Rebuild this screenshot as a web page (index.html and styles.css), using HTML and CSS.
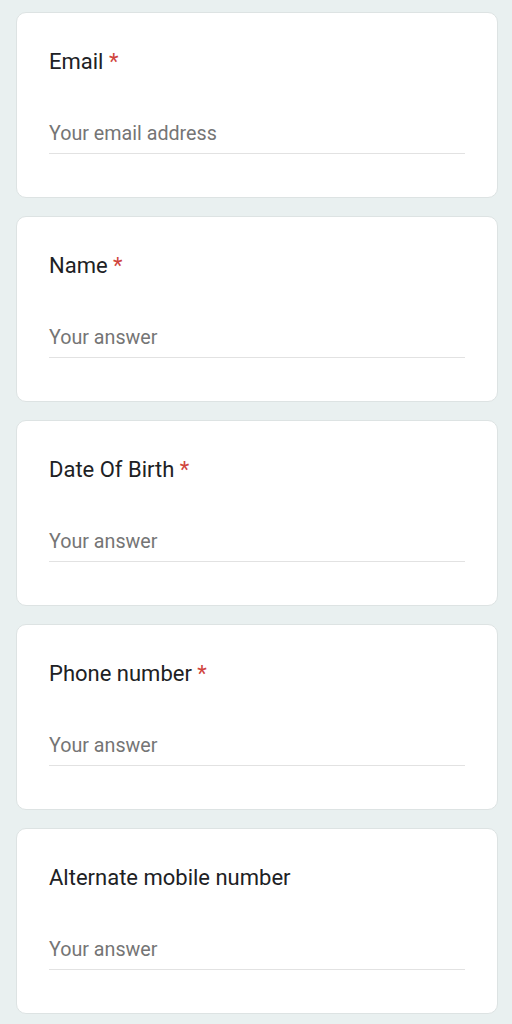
FILE: index.html
```html
<!DOCTYPE html>
<html>
<head>
<meta charset="utf-8">
<link rel="stylesheet" href="styles.css">
</head>
<body>
<main class="form">
  <section class="card">
    <div class="label">Email <span class="req">*</span></div>
    <div class="field">Your email address</div>
  </section>
  <section class="card">
    <div class="label">Name <span class="req">*</span></div>
    <div class="field">Your answer</div>
  </section>
  <section class="card">
    <div class="label">Date Of Birth <span class="req">*</span></div>
    <div class="field">Your answer</div>
  </section>
  <section class="card">
    <div class="label">Phone number <span class="req">*</span></div>
    <div class="field">Your answer</div>
  </section>
  <section class="card">
    <div class="label">Alternate mobile number</div>
    <div class="field">Your answer</div>
  </section>
</main>
</body>
</html>
```
FILE: styles.css
```css
html, body {
  margin: 0;
  padding: 0;
  background: #e9f0f0;
}
body {
  font-family: Roboto, "Liberation Sans", Arial, sans-serif;
}
.form {
  display: flex;
  flex-direction: column;
  gap: 18px;
  padding: 12px 14px 0 16px;
}
.card {
  box-sizing: border-box;
  height: 186px;
  background: #ffffff;
  border: 1px solid #dde3e3;
  border-radius: 10px;
  padding: 35px 32px 0 32px;
}
.label {
  font-size: 22px;
  line-height: 28px;
  color: #202124;
}
.req {
  color: #d0453d;
}
.field {
  margin-top: 46px;
  font-size: 19.7px;
  line-height: 24px;
  color: #757575;
  padding-bottom: 7px;
  border-bottom: 1px solid #e2e2e2;
}
```
